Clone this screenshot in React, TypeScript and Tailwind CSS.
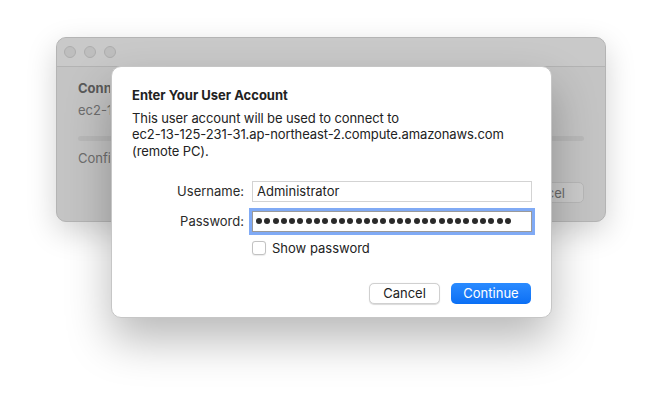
import React from 'react';

const font = { fontFamily: 'Inter, "Noto Sans", sans-serif' };

function BackWindow() {
  return (
    <div className="ml-[56px] mt-[37px] w-[550px] h-[185px] rounded-[10px] bg-[#c4c4c4] border border-[#b4b4b4] shadow-[0_10px_30px_rgba(0,0,0,0.18)] overflow-hidden flex flex-col">
      <div className="h-[29px] bg-[#c9c9c9] border-b border-[#b3b3b3] flex items-center gap-[8px] pl-[7px] shrink-0">
        <div className="w-[12px] h-[12px] rounded-full bg-[#bebebe] border border-[#adadad]" />
        <div className="w-[12px] h-[12px] rounded-full bg-[#bebebe] border border-[#adadad]" />
        <div className="w-[12px] h-[12px] rounded-full bg-[#bebebe] border border-[#adadad]" />
      </div>
      <div className="flex flex-col px-[21px] pt-[13px] text-[13px] leading-[16px]">
        {/* only the part left of the sheet shows */}
        <div className="w-[32px] overflow-hidden whitespace-nowrap font-bold text-[#5a5a5a]">Conn</div>
        <div className="mt-[6px] w-[32px] overflow-hidden whitespace-nowrap text-[#6e6e6e]">ec2-1</div>
        <div className="mt-[18px] h-[5px] rounded-full bg-[#b9b9b9]" />
        <div className="mt-[9px] w-[32px] overflow-hidden whitespace-nowrap text-[#6e6e6e]">Confi</div>
        <div className="mt-[16px] flex justify-end">
          <div className="w-[80px] h-[21px] rounded-[5px] bg-[#cbcbcb] border border-[#b7b7b7] flex items-center justify-end pr-[18px] text-[#6a6a6a]">
            <span>cel</span>
          </div>
        </div>
      </div>
    </div>
  );
}

function Dots({ n }: { n: number }) {
  return (
    <div className="flex items-center gap-[2.3px]">
      {Array.from({ length: n }).map((_, i) => (
        <span key={i} className="w-[6px] h-[6px] rounded-full bg-[#2a2a2a]" />
      ))}
    </div>
  );
}

function Dialog() {
  return (
    <div className="absolute left-[111px] top-[66px] w-[441px] h-[252px] rounded-[10px] bg-white border border-[#c6c6c6] shadow-[0_22px_45px_rgba(0,0,0,0.28)] flex flex-col px-[20px] pt-[20px] text-[13px] leading-[16px] text-[#222]">
      <div className="font-bold">Enter Your User Account</div>
      <div className="mt-[7px] leading-[16.3px] tracking-[-0.1px]">
        This user account will be used to connect to
        <br />
        ec2-13-125-231-31.ap-northeast-2.compute.amazonaws.com
        <br />
        (remote PC).
      </div>
      <div className="mt-[22px] grid grid-cols-[112px_280px] gap-x-[8px] items-center">
        <div className="text-right text-[#2a2a2a]">Username:</div>
        <div className="h-[21px] border border-[#d3d3d3] bg-white flex items-center px-[4px]">Administrator</div>
        <div className="mt-[9px] text-right text-[#2a2a2a]">Password:</div>
        <div className="mt-[9px] h-[21px] border border-[#9a9a9a] bg-white flex items-center pl-[3px] ring-[3px] ring-[#80aaf5] overflow-hidden">
          <Dots n={31} />
        </div>
        <div />
        <div className="mt-[8px] flex items-center gap-[6px]">
          <div className="w-[14px] h-[14px] rounded-[3px] border border-[#c2c2c2] bg-white shadow-[0_0.5px_1px_rgba(0,0,0,0.08)]" />
          <span className="text-[#222]">Show password</span>
        </div>
      </div>
      <div className="mt-[27px] flex justify-end gap-[11px]">
        <div className="w-[71px] h-[21px] rounded-[5px] bg-white border border-[#d0d0d0] shadow-[0_0.5px_1px_rgba(0,0,0,0.15)] flex items-center justify-center text-[#222]">
          Cancel
        </div>
        <div className="w-[80px] h-[21px] rounded-[5px] bg-gradient-to-b from-[#2a8bff] to-[#0a6ff5] flex items-center justify-center text-white">
          Continue
        </div>
      </div>
    </div>
  );
}

export default function App() {
  return (
    <div className="relative w-[662px] h-[393px] bg-white overflow-hidden" style={font}>
      <BackWindow />
      <Dialog />
    </div>
  );
}
